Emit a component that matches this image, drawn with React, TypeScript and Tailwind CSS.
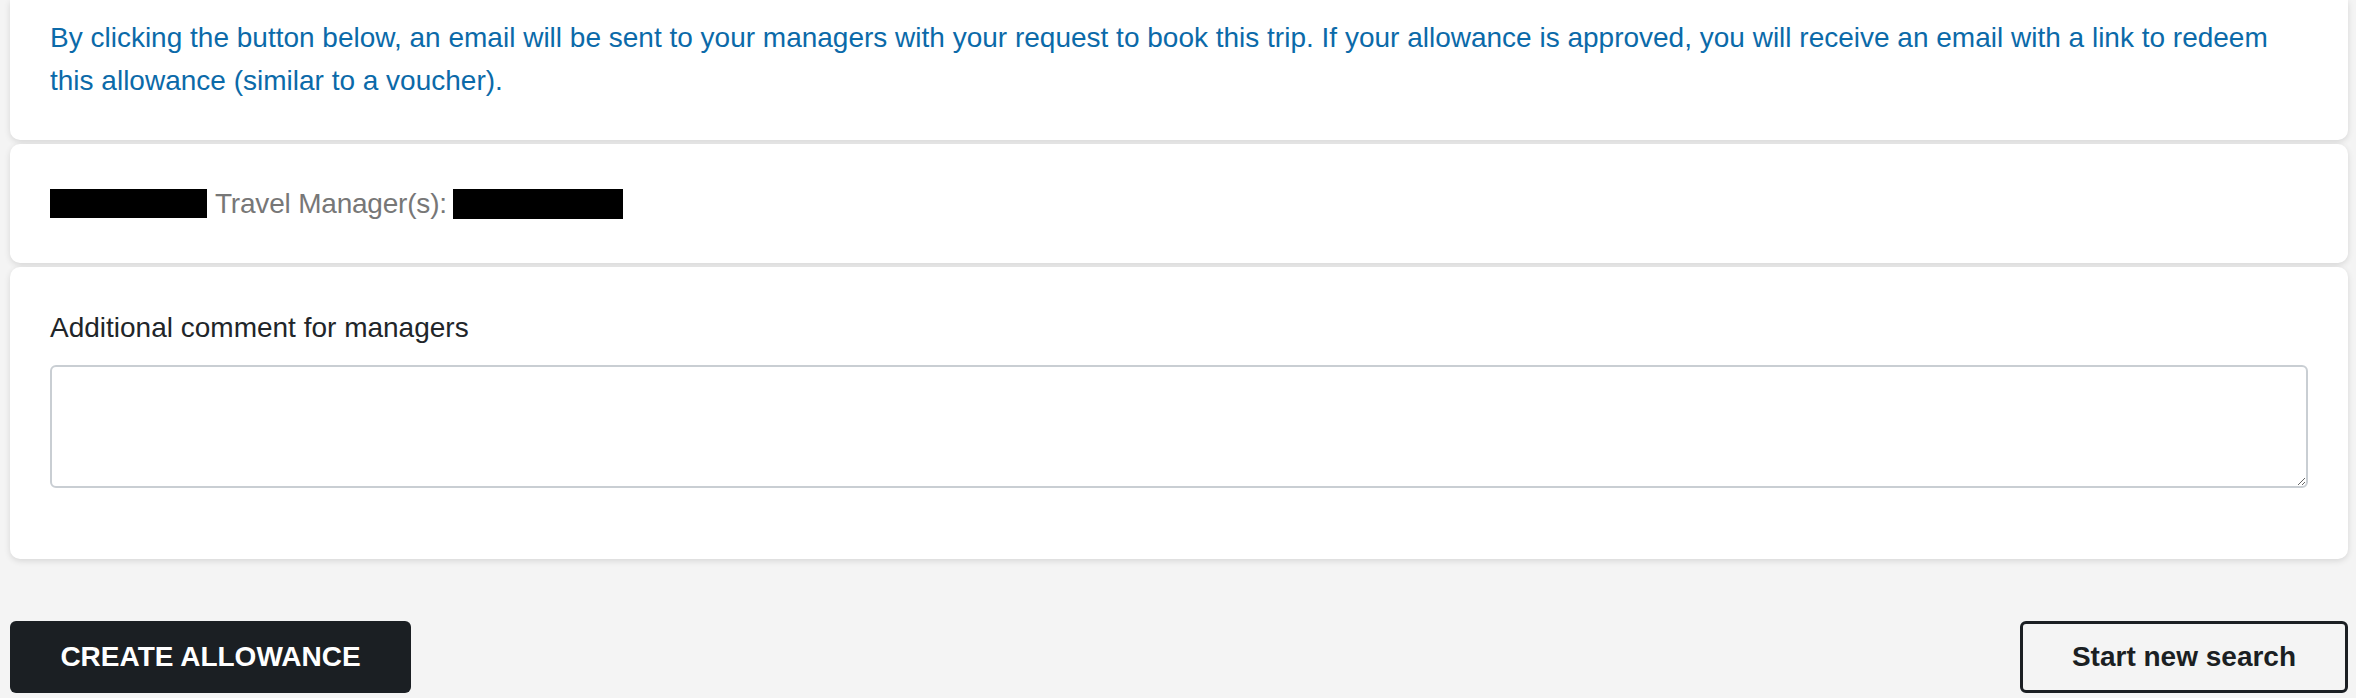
import React from 'react';

const font = { fontFamily: '"Liberation Sans", Arial, Helvetica, sans-serif' };

export default function App() {
  return (
    <div
      className="min-h-[698px] bg-[#f4f4f4] px-[10px] pr-[8px] text-[28px]"
      style={font}
    >
      <div className="flex flex-col gap-[4px]">
        <section className="rounded-b-[10px] bg-white px-[40px] pb-[38px] pt-[16px] shadow-[0_2px_6px_rgba(0,0,0,0.12)]">
          <p className="max-w-[2240px] leading-[43px] text-[#0b6aa9]">
            By clicking the button below, an email will be sent to your managers with your
            request to book this trip. If your allowance is approved, you will receive an email
            with a link to redeem this allowance (similar to a voucher).
          </p>
        </section>

        <section className="rounded-[10px] bg-white px-[40px] py-[38px] shadow-[0_2px_6px_rgba(0,0,0,0.12)]">
          <div className="flex items-center leading-[43px] text-[#777777]">
            <span className="mr-[8px] inline-block h-[29px] w-[157px] bg-black" />
            <span className="tracking-[-0.2px]">Travel Manager(s):</span>
            <span className="ml-[6px] inline-block h-[30px] w-[170px] bg-black" />
          </div>
        </section>

        <section className="rounded-[10px] bg-white px-[40px] pb-[71px] pt-[39px] shadow-[0_2px_6px_rgba(0,0,0,0.12)]">
          <label className="block leading-[43px] text-[#212529]">
            Additional comment for managers
          </label>
          <textarea
            className="mt-[16px] block h-[123px] w-full resize-y rounded-[6px] border-2 border-[#c9ced3] bg-white px-[12px] py-[8px] text-[28px] outline-none"
            style={font}
          />
        </section>
      </div>

      <div className="mt-[62px] flex items-center justify-between">
        <button
          type="button"
          className="flex h-[72px] w-[401px] items-center justify-center rounded-[6px] bg-[#1b1f23] text-[28px] font-bold uppercase text-white"
        >
          Create allowance
        </button>
        <button
          type="button"
          className="flex h-[72px] w-[328px] items-center justify-center rounded-[6px] border-[3px] border-[#1b1f23] bg-transparent text-[28px] font-bold text-[#1b1f23]"
        >
          Start new search
        </button>
      </div>
    </div>
  );
}
